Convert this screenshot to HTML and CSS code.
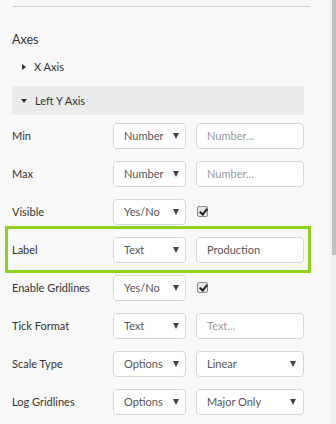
FILE: index.html
```html
<!DOCTYPE html>
<html lang="en">
  <head>
    <meta charset="utf-8" />
    <title>Chart settings</title>
    <link rel="stylesheet" href="styles.css">
  </head>
  <body>
    <div class="page">
      <main class="panel">
        <hr class="divider" />
        <h2 class="section-title">Axes</h2>
        <div class="group">
          <span class="caret caret-right"></span>X Axis
        </div>
        <div class="group group-open">
          <span class="caret caret-down"></span>Left Y Axis
        </div>

        <div class="row">
          <span class="row-label">Min</span>
          <span class="select">Number<i class="arrow"></i></span>
          <span class="field placeholder">Number...</span>
        </div>
        <div class="row">
          <span class="row-label">Max</span>
          <span class="select">Number<i class="arrow"></i></span>
          <span class="field placeholder">Number...</span>
        </div>
        <div class="row">
          <span class="row-label">Visible</span>
          <span class="select">Yes/No<i class="arrow"></i></span>
          <span class="check"></span>
        </div>
        <div class="row row-highlight">
          <span class="row-label">Label</span>
          <span class="select">Text<i class="arrow"></i></span>
          <span class="field">Production</span>
        </div>
        <div class="row">
          <span class="row-label">Enable Gridlines</span>
          <span class="select">Yes/No<i class="arrow"></i></span>
          <span class="check"></span>
        </div>
        <div class="row">
          <span class="row-label">Tick Format</span>
          <span class="select">Text<i class="arrow"></i></span>
          <span class="field placeholder">Text...</span>
        </div>
        <div class="row">
          <span class="row-label">Scale Type</span>
          <span class="select">Options<i class="arrow"></i></span>
          <span class="field select-wide">Linear<i class="arrow"></i></span>
        </div>
        <div class="row">
          <span class="row-label">Log Gridlines</span>
          <span class="select">Options<i class="arrow"></i></span>
          <span class="field select-wide">Major Only<i class="arrow"></i></span>
        </div>
      </main>
      <div class="scrollbar"><div class="thumb"></div></div>
    </div>
  </body>
</html>
```

FILE: styles.css
```css
html,
body {
  margin: 0;
  height: 100%;
}

body {
  font-family: Lato, "Open Sans", sans-serif;
  font-size: 11px;
  color: #444;
  background: #f8f8f8;
}

.page {
  display: flex;
  height: 424px;
  overflow: hidden;
}

.panel {
  flex: 1;
  padding: 6px 26px 0 12px;
}

.divider {
  border: 0;
  border-top: 1px solid #cfcfcf;
  margin: 0 -6px 0 0;
}

.section-title {
  font-size: 12.5px;
  font-weight: normal;
  color: #333;
  margin: 23px 0 0;
  line-height: 20px;
}

.group {
  display: flex;
  align-items: center;
  height: 29px;
  margin-top: 2px;
  padding-left: 7px;
  color: #333;
}

.group-open {
  background: #ebebeb;
  margin-top: 5px;
  padding-left: 6px;
}

.caret {
  width: 0;
  height: 0;
  margin-right: 8px;
  border-style: solid;
}

.caret-right {
  border-width: 3.5px 0 3.5px 4px;
  border-color: transparent transparent transparent #333;
  margin-left: 3px;
}

.caret-down {
  border-width: 4px 3.5px 0 3.5px;
  border-color: #333 transparent transparent transparent;
  margin-left: 3px;
}

.row {
  display: flex;
  align-items: center;
  height: 25px;
  margin-top: 13px;
}

.group-open + .row {
  margin-top: 8px;
}

.row-label {
  width: 101px;
  flex: none;
  color: #333;
}

.select,
.field {
  box-sizing: border-box;
  flex: none;
  height: 26px;
  display: flex;
  align-items: center;
  border: 1px solid #d6d6d6;
  border-radius: 4px;
  background: #fff;
  color: #555;
}

.select {
  width: 73px;
  padding: 0 6px 0 10px;
  justify-content: space-between;
}

.field {
  width: 108px;
  margin-left: 10px;
  padding: 0 7px 0 10px;
}

.select-wide {
  justify-content: space-between;
}

.placeholder {
  color: #9a9a9a;
}

.arrow {
  width: 0;
  height: 0;
  border-style: solid;
  border-width: 6px 3px 0 3px;
  border-color: #444 transparent transparent transparent;
}

.check {
  box-sizing: border-box;
  width: 11px;
  height: 11px;
  margin-left: 11px;
  border: 1px solid #8a8a8a;
  border-radius: 2px;
  background: #e6e6e6;
  position: relative;
}

.check::after {
  content: "";
  position: absolute;
  left: 3px;
  top: 0px;
  width: 3px;
  height: 6px;
  border: solid #222;
  border-width: 0 2px 2px 0;
  transform: rotate(40deg);
}

.row-highlight {
  margin: 2px -7px 0 -7px;
  padding: 8px 4px;
  border: 3px solid #8fd31c;
}

.row-highlight + .row {
  margin-top: 2px;
}

.scrollbar {
  width: 6px;
  background: #f0f0f0;
  display: flex;
  justify-content: flex-end;
}

.thumb {
  width: 4px;
  height: 255px;
  background: #c1c1c1;
}
```
